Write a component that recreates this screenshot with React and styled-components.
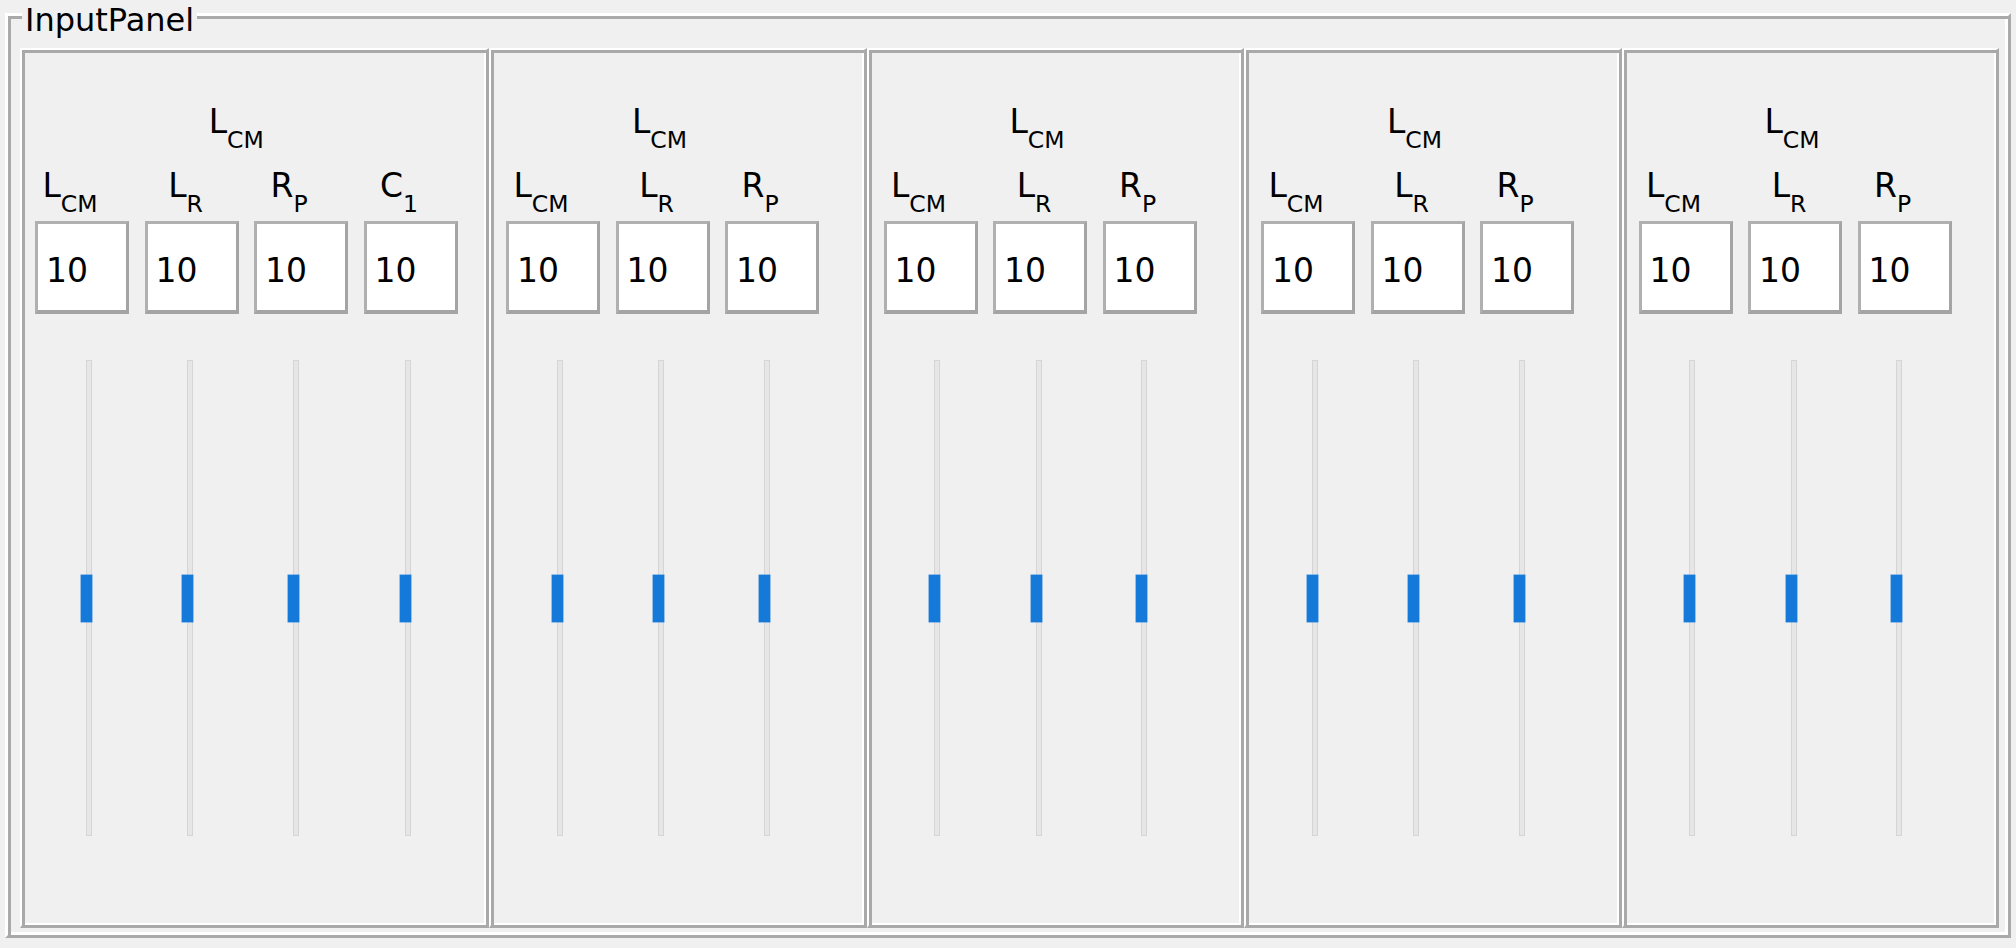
import React from 'react';
import styled, { createGlobalStyle } from 'styled-components';

const GREY = '#a9a9a9';
const WHITE = '#ffffff';
const BG = '#f0f0f0';

const GlobalStyle = createGlobalStyle`
  html, body {
    margin: 0;
    padding: 0;
    background: ${BG};
  }
  body {
    font-family: "DejaVu Sans", Tahoma, Verdana, sans-serif;
    color: #000;
  }
`;

const Page = styled.div`
  box-sizing: border-box;
  width: 2016px;
  height: 948px;
  padding: 13px 0 0 5px;
  overflow: hidden;
`;

const Frame = styled.section`
  box-sizing: border-box;
  width: 2006px;
  height: 925px;
  display: flex;
  flex-direction: column;
  border-style: solid;
  border-width: 3px;
  border-color: ${WHITE} ${GREY} ${GREY} ${WHITE};
  box-shadow: inset 3px 3px 0 ${GREY}, inset -3px -3px 0 ${WHITE};
  padding: 0 9px 7px 12px;
`;

const Title = styled.div`
  align-self: flex-start;
  margin: -14px 0 9px 2px;
  padding: 0 3px;
  font-size: 32px;
  line-height: 37px;
  background: ${BG};
  white-space: nowrap;
`;

const PanelRow = styled.div`
  flex: 1;
  display: grid;
  grid-template-columns: 469px repeat(4, 1fr);
`;

const Panel = styled.div`
  box-sizing: border-box;
  border-style: solid;
  border-width: 2px 3px 3px 2px;
  border-color: ${WHITE} ${GREY} ${GREY} ${WHITE};
  box-shadow: inset 3px 3px 0 ${GREY}, inset -2px -2px 0 ${WHITE};
  padding: 53px 0 0 ${(p) => p.$inset}px;
`;

const Group = styled.div`
  display: flex;
  flex-direction: column;
  width: fit-content;
`;

const Label = styled.div`
  box-sizing: border-box;
  height: 48px;
  font-size: 33px;
  line-height: 37px;
  text-align: center;
  white-space: nowrap;
  padding-right: ${(p) => p.$shift || 0}px;
`;

const Sub = styled.span`
  font-size: 23.5px;
  line-height: 23px;
  vertical-align: -15px;
`;

const Columns = styled.div`
  display: grid;
  grid-template-columns: repeat(${(p) => p.$count}, 94px);
  column-gap: 15.5px;
  margin-top: 16px;
`;

const Column = styled.div`
  display: flex;
  flex-direction: column;
`;

const ValueBox = styled.input`
  box-sizing: border-box;
  width: 94px;
  height: 93px;
  margin: 6px 0 0;
  padding: 7px 0 0 8px;
  border-style: solid;
  border-width: 3px 3px 4px 3px;
  border-color: #b0b0b0 #a4a4a4 #a4a4a4 #b0b0b0;
  background: #fff;
  font-family: "DejaVu Sans", Tahoma, Verdana, sans-serif;
  font-size: 33px;
  color: #000;
  outline: none;
`;

const SliderSlot = styled.div`
  margin-top: 46px;
  display: flex;
  justify-content: center;
  padding-left: ${(p) => (p.$shift > 0 ? p.$shift * 2 : 0)}px;
  padding-right: ${(p) => (p.$shift < 0 ? -p.$shift * 2 : 0)}px;
`;

const Slider = styled.div`
  position: relative;
  width: 11px;
  height: 476px;
  display: flex;
  justify-content: flex-end;
`;

const Track = styled.div`
  box-sizing: border-box;
  width: 6px;
  height: 100%;
  background: #e6e6e6;
  border: 1px solid #d5d5d5;
`;

const Thumb = styled.div`
  position: absolute;
  left: 0;
  width: 11px;
  height: 47px;
  background: #1479d8;
  box-shadow: 0 0 0 0.5px #3d8fe0;
`;

const LABELS = {
  LCM: ['L', 'CM'],
  LR: ['L', 'R'],
  RP: ['R', 'P'],
  C1: ['C', '1'],
};

const LABEL_SHIFT = [24, 12, 24, 23];
const THUMB_SHIFT = [4, -4, -8, -5.5];

const PANELS = [
  { inset: 13, headShift: 20, cols: ['LCM', 'LR', 'RP', 'C1'] },
  { inset: 15, headShift: 6, cols: ['LCM', 'LR', 'RP'] },
  { inset: 15, headShift: 6, cols: ['LCM', 'LR', 'RP'] },
  { inset: 15, headShift: 6, cols: ['LCM', 'LR', 'RP'] },
  { inset: 15, headShift: 6, cols: ['LCM', 'LR', 'RP'] },
];

function SubText({ id }) {
  const [main, sub] = LABELS[id];
  return (
    <>
      {main}
      <Sub>{sub}</Sub>
    </>
  );
}

function VSlider({ value, max }) {
  const top = `calc(${(1 - value / max) * 100}% - 23.5px)`;
  return (
    <Slider>
      <Track />
      <Thumb style={{ top }} />
    </Slider>
  );
}

export default function App() {
  return (
    <>
      <GlobalStyle />
      <Page>
        <Frame>
          <Title>InputPanel</Title>
          <PanelRow>
            {PANELS.map((panel, pi) => (
              <Panel key={pi} $inset={panel.inset}>
                <Group>
                  <Label $shift={panel.headShift}>
                    <SubText id="LCM" />
                  </Label>
                  <Columns $count={panel.cols.length}>
                    {panel.cols.map((c, ci) => (
                      <Column key={ci}>
                        <Label $shift={LABEL_SHIFT[ci]}>
                          <SubText id={c} />
                        </Label>
                        <ValueBox readOnly defaultValue="10" />
                        <SliderSlot $shift={THUMB_SHIFT[ci]}>
                          <VSlider value={10} max={20} />
                        </SliderSlot>
                      </Column>
                    ))}
                  </Columns>
                </Group>
              </Panel>
            ))}
          </PanelRow>
        </Frame>
      </Page>
    </>
  );
}
